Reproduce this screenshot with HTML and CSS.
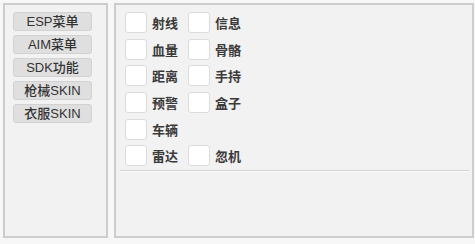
FILE: index.html
```html
<!DOCTYPE html>
<html>
<head>
<meta charset="utf-8">
<link rel="stylesheet" href="styles.css">
</head>
<body>
<div class="app">
  <div class="panel side">
    <div class="btn">ESP菜单</div>
    <div class="btn">AIM菜单</div>
    <div class="btn">SDK功能</div>
    <div class="btn">枪械SKIN</div>
    <div class="btn">衣服SKIN</div>
  </div>
  <div class="panel main">
    <div class="grid">
      <label class="item"><span class="box"></span><span class="txt">射线</span></label>
      <label class="item"><span class="box"></span><span class="txt">信息</span></label>
      <label class="item"><span class="box"></span><span class="txt">血量</span></label>
      <label class="item"><span class="box"></span><span class="txt">骨骼</span></label>
      <label class="item"><span class="box"></span><span class="txt">距离</span></label>
      <label class="item"><span class="box"></span><span class="txt">手持</span></label>
      <label class="item"><span class="box"></span><span class="txt">预警</span></label>
      <label class="item"><span class="box"></span><span class="txt">盒子</span></label>
      <label class="item"><span class="box"></span><span class="txt">车辆</span></label>
      <span class="empty"></span>
      <label class="item"><span class="box"></span><span class="txt">雷达</span></label>
      <label class="item"><span class="box"></span><span class="txt">忽机</span></label>
    </div>
    <div class="divider"></div>
  </div>
</div>
</body>
</html>
```
FILE: styles.css
```css
html, body {
  margin: 0;
  padding: 0;
  background: #f7f7f7;
  font-family: "Liberation Sans", "Noto Sans CJK SC", sans-serif;
}
.app {
  display: flex;
  gap: 6px;
  padding: 3px 0 0 3px;
  width: 471px;
  height: 235px;
  background: #f7f7f7;
}
.panel {
  box-sizing: border-box;
  height: 235px;
  border: 2px solid #cdcdcd;
  background: #f2f2f2;
}
.side {
  width: 105px;
  padding: 7px 0 0 8px;
  display: flex;
  flex-direction: column;
  gap: 4px;
}
.btn {
  box-sizing: border-box;
  width: 79px;
  height: 19px;
  border: 1px solid #d2d2d2;
  border-radius: 3px;
  background: #dfdfdf;
  color: #333;
  font-size: 13px;
  font-weight: 500;
  line-height: 17px;
  text-align: center;
}
.main {
  width: 360px;
  padding: 7px 3px 0 4px;
}
.grid {
  display: grid;
  grid-template-columns: 63px 63px;
  grid-auto-rows: 21px;
  row-gap: 5.7px;
  padding-left: 5px;
}
.item {
  display: flex;
  align-items: center;
  gap: 5px;
}
.box {
  box-sizing: border-box;
  width: 22px;
  height: 21px;
  background: #fff;
  border: 1px solid #dcdcdc;
  border-radius: 3px;
}
.txt {
  font-size: 13px;
  font-weight: bold;
  color: #3a3a3a;
}
.divider {
  margin-top: 4px;
  height: 1px;
  background: #d4d4d4;
  border-bottom: 1px solid #fbfbfb;
}
```
